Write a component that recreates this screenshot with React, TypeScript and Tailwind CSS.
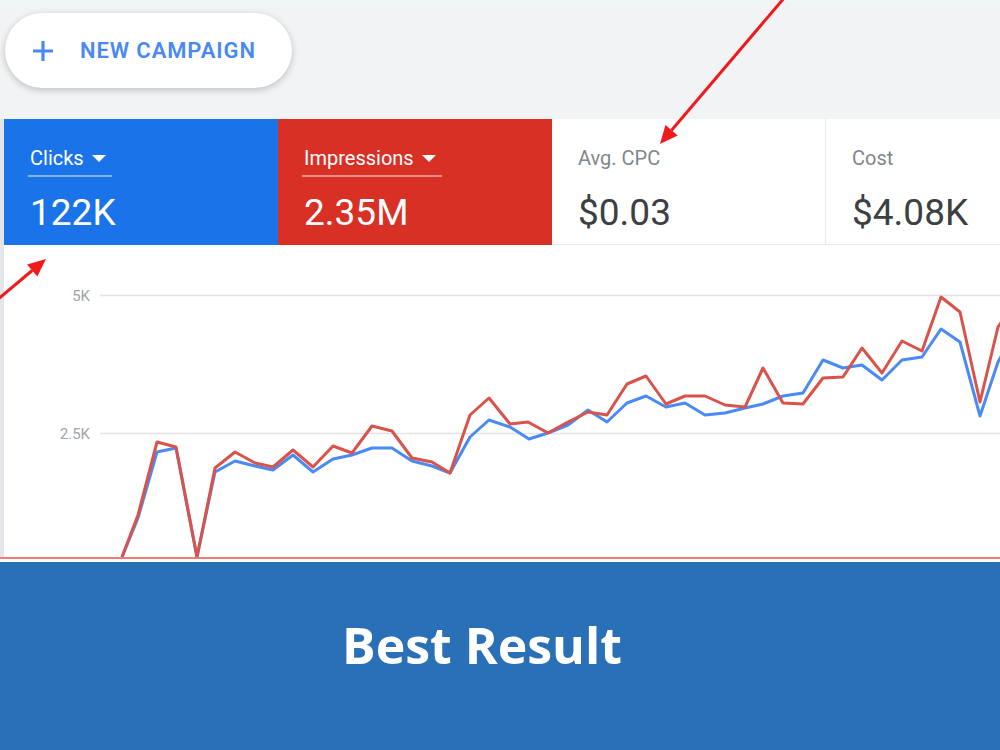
import React from "react";

type Pt = [number, number];

const clicks: Pt[] = [
  [122, 557], [138, 518], [157, 452], [176, 448], [197, 557], [215, 472], [235, 461],
  [255, 466], [273, 470], [293, 455], [313, 472], [333, 459], [352, 455], [372, 448],
  [392, 448], [412, 461], [432, 466], [450, 473], [470, 437], [489, 420], [510, 427],
  [529, 439], [548, 433], [568, 425], [588, 410], [607, 422], [627, 403], [646, 396],
  [666, 407], [685, 403], [705, 415], [725, 413], [745, 408], [763, 404], [783, 396],
  [803, 393], [823, 360], [843, 368], [862, 365], [882, 380], [902, 360], [922, 357],
  [941, 329], [960, 342], [980, 416], [998, 362], [1010, 340],
];

const impressions: Pt[] = [
  [122, 557], [138, 515], [157, 442], [176, 447], [197, 557], [215, 468], [235, 452],
  [255, 463], [273, 467], [293, 450], [313, 467], [333, 446], [352, 453], [372, 426],
  [392, 431], [412, 458], [432, 462], [450, 473], [470, 415], [489, 398], [510, 424],
  [528, 422], [548, 433], [568, 422], [588, 412], [607, 415], [627, 384], [646, 376],
  [666, 404], [685, 396], [705, 396], [725, 405], [745, 407], [763, 368], [783, 403],
  [803, 404], [823, 378], [843, 377], [862, 348], [882, 373], [902, 341], [922, 351],
  [941, 297], [960, 312], [980, 402], [998, 327], [1010, 310],
];

const toPoints = (pts: Pt[]) => pts.map(([x, y]) => `${x},${y}`).join(" ");

function Caret({ color }: { color: string }) {
  return (
    <svg width="14" height="7" viewBox="0 0 14 7" className="ml-[8px]">
      <polygon points="0,0 14,0 7,7" fill={color} />
    </svg>
  );
}

type MetricProps = {
  label: string;
  value: string;
  tone: "blue" | "red" | "plain";
  divider?: boolean;
};

function Metric({ label, value, tone, divider }: MetricProps) {
  const filled = tone !== "plain";
  const bg =
    tone === "blue" ? "bg-[#1a73e8]" : tone === "red" ? "bg-[#d93025]" : "bg-white border-b border-[#e8eaed]";
  return (
    <div
      className={`w-[274px] h-[126px] shrink-0 pl-[24px] pt-[27px] ${bg} ${
        divider ? "border-r border-[#e8eaed]" : ""
      }`}
    >
      {filled ? (
        <div className="inline-flex items-center pl-[2px] pr-[6px] pb-[5px] border-b-2 border-white/45 h-[31px]">
          <span className="text-[20px] leading-[24px] text-white">{label}</span>
          <Caret color="#ffffff" />
        </div>
      ) : (
        <div className="inline-flex items-center pl-[2px] h-[31px] pb-[7px]">
          <span className="text-[20px] leading-[24px] text-[#80868b]">{label}</span>
        </div>
      )}
      <div
        className={`mt-[14px] pl-[2px] text-[37px] leading-[44px] ${
          filled ? "text-white" : "text-[#3c4043]"
        }`}
      >
        {value}
      </div>
    </div>
  );
}

function TrendChart() {
  return (
    <svg width="996" height="312" viewBox="4 245 996 312" className="block">
      <line x1="100" y1="295.5" x2="1000" y2="295.5" stroke="#e3e3e3" strokeWidth="1.5" />
      <line x1="100" y1="433.5" x2="1000" y2="433.5" stroke="#e3e3e3" strokeWidth="1.5" />
      <text
        x="90"
        y="301"
        textAnchor="end"
        fontFamily="Roboto, sans-serif"
        fontSize="15"
        fill="#a0a4a8"
      >
        5K
      </text>
      <text
        x="90"
        y="439"
        textAnchor="end"
        fontFamily="Roboto, sans-serif"
        fontSize="15"
        fill="#a0a4a8"
      >
        2.5K
      </text>
      <polyline
        points={toPoints(clicks)}
        fill="none"
        stroke="#4a8af4"
        strokeWidth="3"
        strokeLinejoin="round"
      />
      <polyline
        points={toPoints(impressions)}
        fill="none"
        stroke="#d9534a"
        strokeWidth="3"
        strokeLinejoin="round"
      />
    </svg>
  );
}

export default function App() {
  return (
    <div className="relative w-[1000px] h-[750px] overflow-hidden bg-[#f1f3f4] font-['Roboto',sans-serif]">
      <div className="h-[3px] bg-[#eef6f6]" />

      {/* toolbar */}
      <div className="h-[116px] pl-[5px] pt-[10px]">
        <button className="flex items-center w-[287px] h-[75px] rounded-full bg-white shadow-[0_2px_7px_rgba(0,0,0,0.22)] pl-[27px]">
          <svg width="22" height="22" viewBox="0 0 22 22">
            <path d="M11 1v20M1 11h20" stroke="#4a89f3" strokeWidth="3.2" fill="none" />
          </svg>
          <span className="ml-[26px] text-[22px] font-semibold tracking-[0.9px] text-[#4a89f3]">
            NEW CAMPAIGN
          </span>
        </button>
      </div>

      {/* metrics + chart panel */}
      <div className="flex">
        <div className="w-[4px] shrink-0 bg-[#e4e6e9]" />
        <div className="flex-1 min-w-0 bg-white">
          <div className="flex overflow-hidden">
            <Metric label="Clicks" value="122K" tone="blue" />
            <Metric label="Impressions" value="2.35M" tone="red" />
            <Metric label="Avg. CPC" value="$0.03" tone="plain" divider />
            <Metric label="Cost" value="$4.08K" tone="plain" />
          </div>
          <TrendChart />
        </div>
      </div>
      <div className="h-[2px] bg-[#f07a74]" />
      <div className="h-[3px] bg-white" />

      {/* banner */}
      <div className="h-[188px] bg-[#2970b6] flex items-center justify-center pr-[36px] pb-[22px]">
        <span className="font-['Open_Sans',sans-serif] font-bold text-[50px] leading-none text-white">
          Best Result
        </span>
      </div>

      {/* annotation arrows */}
      <svg
        className="absolute left-0 top-0 pointer-events-none"
        width="1000"
        height="750"
        viewBox="0 0 1000 750"
      >
        <line x1="785" y1="-3" x2="671.6" y2="130.2" stroke="#f0191b" strokeWidth="3" />
        <polygon points="660,144 677.7,135.4 665.5,125" fill="#f0191b" />
        <line x1="-3" y1="300" x2="32.2" y2="270.5" stroke="#f0191b" strokeWidth="3" />
        <polygon points="46,259 37.3,276.6 27.1,264.4" fill="#f0191b" />
      </svg>
    </div>
  );
}
